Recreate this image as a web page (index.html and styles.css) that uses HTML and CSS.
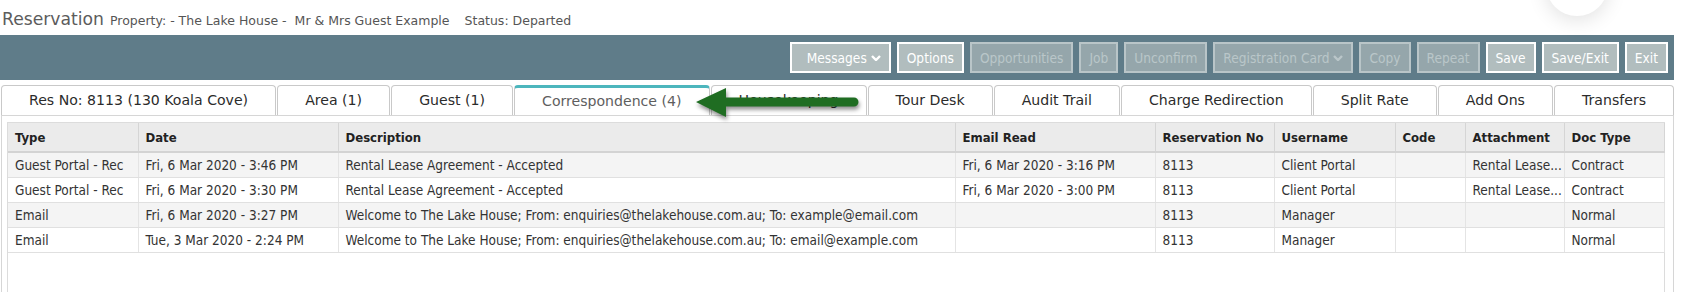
FILE: index.html
```html
<!DOCTYPE html>
<html lang="en">
<head>
    <meta charset="UTF-8">
    <meta name="viewport" content="width=device-width, initial-scale=1.0">
    <title>Reservation - Correspondence</title>
    <link rel="stylesheet" href="styles.css">
</head>
<body>
    <div class="screen">
        <div class="page-title">
            <h1>Reservation</h1>
            <span class="meta">Property: - The Lake House -</span>
            <span class="meta guest">Mr &amp; Mrs Guest Example</span>
            <span class="meta status">Status: Departed</span>
        </div>

        <div class="toolbar">
            <button class="btn btn-menu">Messages <svg class="chev" viewBox="0 0 10 6"><polyline points="1,1 5,5 9,1"/></svg></button>
            <button class="btn">Options</button>
            <button class="btn disabled">Opportunities</button>
            <button class="btn disabled">Job</button>
            <button class="btn disabled">Unconfirm</button>
            <button class="btn disabled">Registration Card <svg class="chev" viewBox="0 0 10 6"><polyline points="1,1 5,5 9,1"/></svg></button>
            <button class="btn disabled">Copy</button>
            <button class="btn disabled">Repeat</button>
            <button class="btn">Save</button>
            <button class="btn">Save/Exit</button>
            <button class="btn">Exit</button>
        </div>

        <div class="tabs">
            <div class="tab">Res No: 8113 (130 Koala Cove)</div>
            <div class="tab">Area (1)</div>
            <div class="tab">Guest (1)</div>
            <div class="tab active">Correspondence (4)</div>
            <div class="tab">Housekeeping</div>
            <div class="tab">Tour Desk</div>
            <div class="tab">Audit Trail</div>
            <div class="tab">Charge Redirection</div>
            <div class="tab">Split Rate</div>
            <div class="tab">Add Ons</div>
            <div class="tab">Transfers</div>
        </div>

        <div class="panel">
            <div class="grid-wrap">
                <table class="grid">
                    <colgroup>
                        <col class="c-type">
                        <col class="c-date">
                        <col class="c-desc">
                        <col class="c-read">
                        <col class="c-resno">
                        <col class="c-user">
                        <col class="c-code">
                        <col class="c-attach">
                        <col class="c-doc">
                    </colgroup>
                    <thead>
                        <tr>
                            <th>Type</th>
                            <th>Date</th>
                            <th>Description</th>
                            <th>Email Read</th>
                            <th>Reservation No</th>
                            <th>Username</th>
                            <th>Code</th>
                            <th>Attachment</th>
                            <th>Doc Type</th>
                        </tr>
                    </thead>
                    <tbody>
                        <tr>
                            <td>Guest Portal - Rec</td>
                            <td>Fri, 6 Mar 2020 - 3:46 PM</td>
                            <td>Rental Lease Agreement - Accepted</td>
                            <td>Fri, 6 Mar 2020 - 3:16 PM</td>
                            <td>8113</td>
                            <td>Client Portal</td>
                            <td></td>
                            <td class="attach">Rental Lease...</td>
                            <td>Contract</td>
                        </tr>
                        <tr>
                            <td>Guest Portal - Rec</td>
                            <td>Fri, 6 Mar 2020 - 3:30 PM</td>
                            <td>Rental Lease Agreement - Accepted</td>
                            <td>Fri, 6 Mar 2020 - 3:00 PM</td>
                            <td>8113</td>
                            <td>Client Portal</td>
                            <td></td>
                            <td class="attach">Rental Lease...</td>
                            <td>Contract</td>
                        </tr>
                        <tr>
                            <td>Email</td>
                            <td>Fri, 6 Mar 2020 - 3:27 PM</td>
                            <td>Welcome to The Lake House; From: enquiries@thelakehouse.com.au; To: example@email.com</td>
                            <td></td>
                            <td>8113</td>
                            <td>Manager</td>
                            <td></td>
                            <td></td>
                            <td>Normal</td>
                        </tr>
                        <tr>
                            <td>Email</td>
                            <td>Tue, 3 Mar 2020 - 2:24 PM</td>
                            <td>Welcome to The Lake House; From: enquiries@thelakehouse.com.au; To: email@example.com</td>
                            <td></td>
                            <td>8113</td>
                            <td>Manager</td>
                            <td></td>
                            <td></td>
                            <td>Normal</td>
                        </tr>
                    </tbody>
                </table>
            </div>
        </div>

        <!-- callout pointing at the Correspondence tab -->
        <svg class="callout" viewBox="0 0 175 40">
            <path d="M6 18 L36 4 L36 13.5 L164 13.5 A4.5 4.5 0 0 1 164 22.5 L36 22.5 L36 33 Z"/>
        </svg>
        <div class="float-shadow"></div>
    </div>
</body>
</html>
```

FILE: styles.css
```css
body {
    margin: 0;
    font-family: "DejaVu Sans", Verdana, sans-serif;
    background: #fff;
    color: #333;
    overflow: hidden;
}
.screen {
    position: relative;
    padding-right: 11px;
}
.page-title {
    height: 35px;
    box-sizing: border-box;
    padding: 9px 0 0 2px;
    display: flex;
    align-items: baseline;
    white-space: nowrap;
}
.page-title h1 {
    margin: 0 6px 0 0;
    font-size: 17.2px;
    font-weight: normal;
    line-height: 20px;
    color: #5c5c5c;
}
.meta {
    font-size: 12.5px;
    color: #555;
}
.guest {
    margin-left: 8px;
}
.status {
    margin-left: 15px;
}
.toolbar {
    height: 45px;
    background-color: #5f7c89;
    display: flex;
    justify-content: flex-end;
    align-items: center;
    gap: 6px;
    padding-right: 6px;
}
.btn {
    height: 31px;
    box-sizing: border-box;
    padding: 0 8px;
    font-family: "DejaVu Sans Condensed", "DejaVu Sans", sans-serif;
    font-stretch: condensed;
    font-size: 13.6px;
    color: #fff;
    background-color: #b1bdbe;
    border: 2px solid #fff;
    display: flex;
    align-items: center;
    gap: 4px;
    cursor: pointer;
}
.btn-menu {
    padding-left: 15px;
}
.btn.disabled {
    color: #bac6c9;
    background-color: #95a6ab;
    border-color: #b9c5c8;
    cursor: default;
}
.chev {
    width: 10px;
    height: 6px;
    fill: none;
    stroke: currentColor;
    stroke-width: 2.4;
}
.tabs {
    display: flex;
    gap: 1px;
    margin: 5px 0 0 1px;
}
.tab {
    flex: 1 1 auto;
    height: 30px;
    box-sizing: border-box;
    border: 1px solid #c9c9c9;
    border-bottom: none;
    border-radius: 4px 4px 0 0;
    text-align: center;
    font-size: 14.1px;
    line-height: 29px;
    color: #2b2b2b;
    white-space: nowrap;
}
.tab.active {
    border-top: 3px solid #4db6bd;
    line-height: 27px;
    color: #5e5e5e;
}
.panel {
    margin-left: 1px;
    border: 1px solid #d6d6d6;
    padding: 6px 8px 0 5px;
}
.grid-wrap {
    height: 200px;
    border: 1px solid #dcdcdc;
    border-bottom: none;
}
.grid {
    table-layout: fixed;
    border-collapse: collapse;
    width: 1656px;
    font-family: "DejaVu Sans Condensed", "DejaVu Sans", sans-serif;
    font-stretch: condensed;
    font-size: 13.5px;
}
.c-type { width: 130px; }
.c-date { width: 200px; }
.c-desc { width: 617px; }
.c-read { width: 200px; }
.c-resno { width: 119px; }
.c-user { width: 121px; }
.c-code { width: 70px; }
.c-attach { width: 99px; }
.c-doc { width: 100px; }
.grid th {
    height: 28px;
    padding: 0 7px;
    text-align: left;
    font-size: 13px;
    font-weight: bold;
    color: #222;
    white-space: nowrap;
    background-color: #ebebeb;
    border-right: 1px solid #d5d5d5;
    border-bottom: 2px solid #d3d3d3;
}
.grid td {
    height: 24px;
    padding: 0 7px;
    color: #333;
    white-space: nowrap;
    overflow: hidden;
    border-right: 1px solid #e4e4e4;
    border-bottom: 1px solid #e0e0e0;
}
.grid tbody tr:nth-child(odd) td {
    background-color: #f4f4f4;
}
.grid td.attach {
    padding-right: 0;
}
.callout {
    position: absolute;
    left: 690px;
    top: 84px;
    width: 175px;
    height: 40px;
    fill: #1f6d22;
    filter: drop-shadow(1px 3px 2px rgba(0, 0, 0, 0.45));
}
.float-shadow {
    position: absolute;
    left: 1546px;
    top: -46px;
    width: 62px;
    height: 62px;
    border-radius: 50%;
    background: #fff;
    box-shadow: 0 4px 20px rgba(0, 0, 0, 0.12);
}
```
